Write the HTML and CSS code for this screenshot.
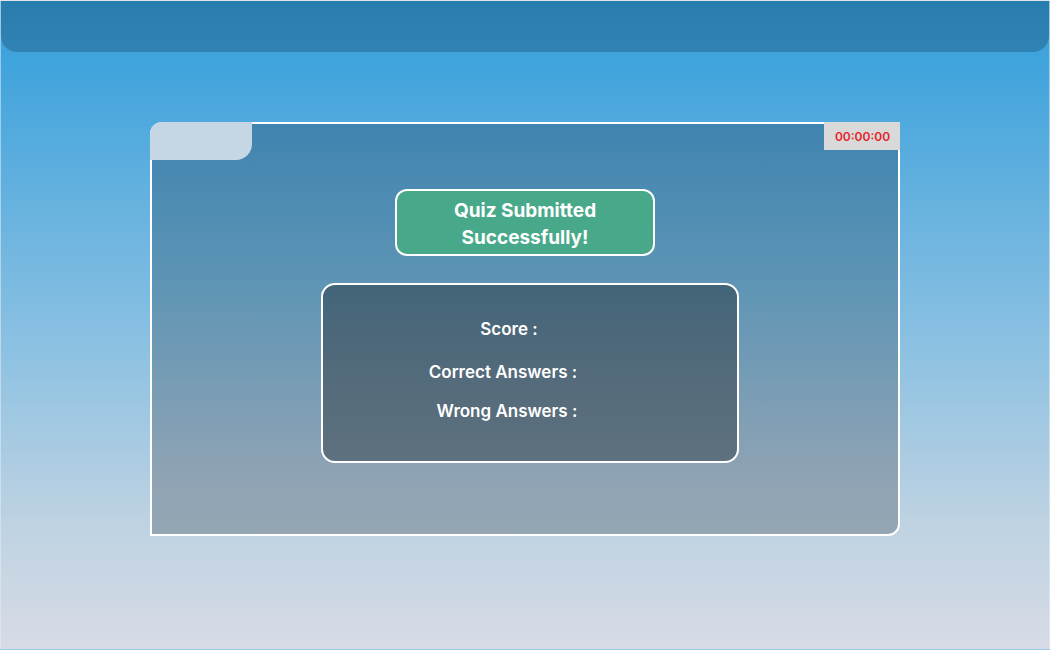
FILE: index.html
```html
<!DOCTYPE html>
<html lang="en">
<head>
<meta charset="utf-8">
<title>Quiz Result</title>
<link rel="stylesheet" href="styles.css">
</head>
<body>
<div class="page">
  <header class="topbar"></header>
  <main class="card">
    <div class="tab"></div>
    <div class="timer">00:00:00</div>
    <div class="success">Quiz Submitted<br>Successfully!</div>
    <section class="results">
      <p class="row row-score">Score :</p>
      <p class="row row-correct">Correct Answers :</p>
      <p class="row row-wrong">Wrong Answers :</p>
    </section>
  </main>
</div>
</body>
</html>
```

FILE: styles.css
```css
* { box-sizing: border-box; }
html, body { margin: 0; padding: 0; }
body {
  font-family: Inter, "Noto Sans", "Liberation Sans", sans-serif;
  width: 1050px;
  height: 650px;
  overflow: hidden;
}
.page {
  width: 1050px;
  height: 650px;
  border: 1px solid rgba(230, 236, 244, 0.55);
  background: linear-gradient(180deg, #3aa0dc 0%, #3fa3dc 9%, #8fc2e2 55%, #bdd2e2 80%, #d7dbe5 100%);
  display: flex;
  flex-direction: column;
}
.topbar {
  height: 51px;
  flex: none;
  background: linear-gradient(180deg, #297dad 0%, #3083b2 100%);
  border-radius: 0 0 16px 16px;
}
.card {
  position: relative;
  margin: 70px 0 0 149px;
  width: 750px;
  height: 414px;
  border: 2px solid #ffffff;
  border-radius: 12px 0 12px 0;
  background: linear-gradient(180deg, #3f84b0 0%, #5f95b5 40%, #8ea3b4 85%, #94a6b3 100%);
  display: flex;
  flex-direction: column;
  align-items: center;
  padding-top: 65px;
}
.tab {
  position: absolute;
  top: -2px;
  left: -2px;
  width: 102px;
  height: 38px;
  background: #c5d6e5;
  border-radius: 12px 0 16px 0;
}
.timer {
  position: absolute;
  top: -2px;
  right: -2px;
  width: 76px;
  height: 28px;
  background: #d9d9d9;
  color: #e3262b;
  font-size: 12px;
  font-weight: 600;
  display: flex;
  align-items: center;
  justify-content: center;
  padding-left: 1px;
}
.success {
  width: 260px;
  height: 67px;
  border: 2px solid #ffffff;
  border-radius: 12px;
  background: #48a98a;
  color: #ffffff;
  font-size: 19px;
  font-weight: 700;
  line-height: 27px;
  text-align: center;
  padding-top: 6px;
}
.results {
  margin: 27px 0 0 10px;
  width: 418px;
  height: 180px;
  border: 2px solid #ffffff;
  border-radius: 14px;
  background: linear-gradient(180deg, #436579 0%, #546b7b 55%, #5e717e 100%);
  color: #ffffff;
  display: flex;
  flex-direction: column;
  align-items: center;
  padding: 34px 48px 0 0;
}
.row {
  margin: 0;
  font-size: 17px;
  font-weight: 600;
  line-height: 20px;
}
.row-correct { margin-top: 23px; }
.row-wrong { margin-top: 19px; }
.row-score { margin-left: 6px; }
.row-correct { margin-left: -6px; }
.row-wrong { margin-left: 2px; }
```
